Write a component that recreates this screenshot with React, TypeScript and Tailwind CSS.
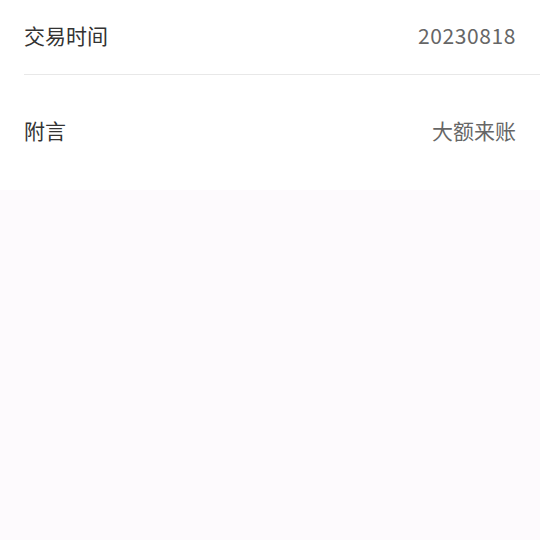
import React from 'react';

const FONT = 'font-["Noto_Sans_CJK_SC","Noto_Sans",sans-serif]';

export default function App() {
  return (
    <div className={`min-h-[540px] w-[540px] bg-[#fdfafd] ${FONT}`}>
      <div className="bg-white pl-6">
        <div className="flex h-[75px] items-center justify-between pr-6 pb-1 border-b border-[#e8e8e8]">
          <span className="text-[21px] leading-none text-[#333333]">交易时间</span>
          <span className="text-[21px] leading-none tracking-[0.6px] text-[#666666]">20230818</span>
        </div>
        <div className="flex h-[115px] items-start justify-between pr-6 pt-[45px]">
          <span className="text-[21px] leading-none text-[#333333]">附言</span>
          <span className="text-[21px] leading-none text-[#666666]">大额来账</span>
        </div>
      </div>
    </div>
  );
}
